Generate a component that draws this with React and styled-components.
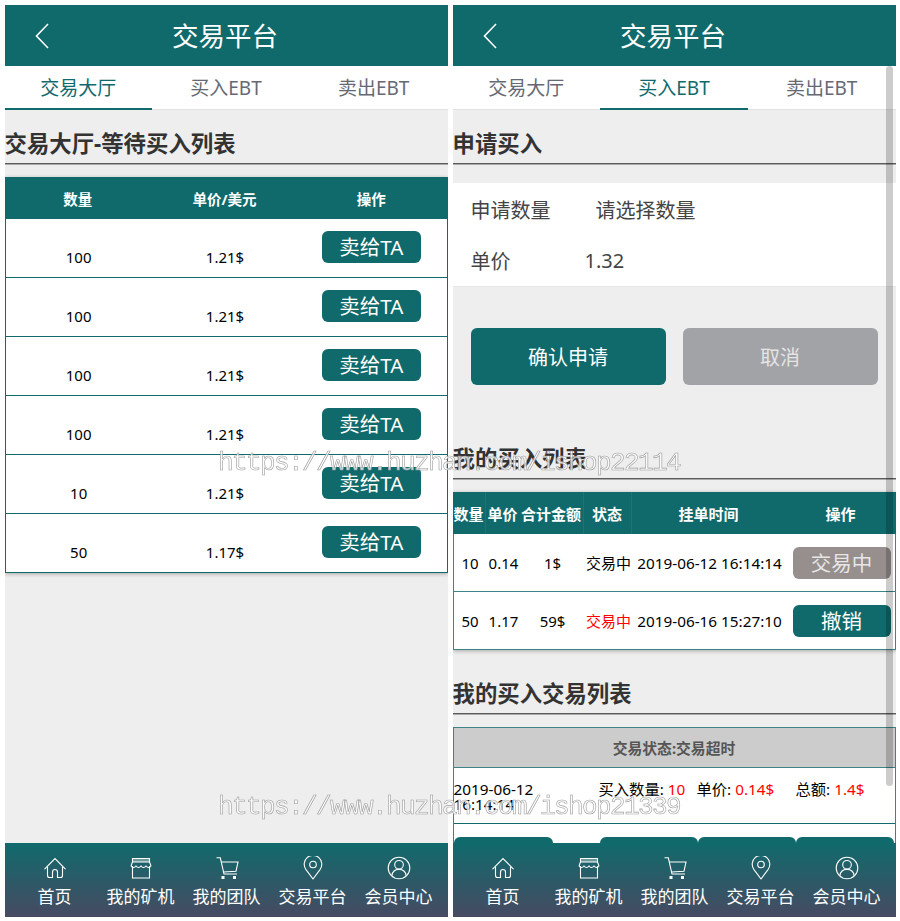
import styled, { createGlobalStyle } from "styled-components";

const teal = "#106a6c";

const Global = createGlobalStyle`
  * { box-sizing: border-box; }
  html, body { margin: 0; padding: 0; background: #fff; }
  body { font-family: "Noto Sans", "Noto Sans CJK SC", sans-serif; }
`;

const Page = styled.div`
  position: relative;
  width: 900px;
  height: 921px;
  padding: 5px 4px 4px 4.5px;
  display: flex;
  gap: 5px;
  overflow: hidden;
`;

const Phone = styled.div`
  position: relative;
  width: 443px;
  height: 912px;
  display: flex;
  flex-direction: column;
  background: #eee;
  overflow: hidden;
`;

const Header = styled.header`
  flex: none;
  height: 61px;
  display: grid;
  grid-template-columns: 1fr auto 1fr;
  align-items: center;
  background: ${teal};
  color: #fff;
`;

const Back = styled.svg`
  margin-left: 30px;
  display: block;
`;

const HeaderTitle = styled.h1`
  margin: 2px 2px 0 0;
  font-size: 26.5px;
  line-height: 1;
  font-weight: 400;
`;

const Tabs = styled.nav`
  flex: none;
  height: 44px;
  display: grid;
  grid-template-columns: repeat(3, 1fr);
  background: #fff;
  border-bottom: 1px solid #e2e2e2;
`;

const Tab = styled.div`
  display: flex;
  align-items: center;
  justify-content: center;
  height: 44px;
  font-size: 19px;
  color: ${({ $active }) => ($active ? teal : "#666973")};
  border-bottom: 2px solid ${({ $active }) => ($active ? teal : "transparent")};
`;

const Scroll = styled.main`
  flex: 1;
  min-height: 0;
  overflow: hidden;
`;

const SectionTitle = styled.h2`
  height: 41px;
  margin: ${({ $top }) => $top}px 0 0;
  padding-bottom: 2px;
  display: flex;
  align-items: center;
  font-size: 22.4px;
  font-weight: 700;
  color: #333;
  border-bottom: 1px solid #5c5c5c;
  box-shadow: 0 1px 0 #aaa;
`;

const Table = styled.div`
  margin-top: 13px;
  background: #fff;
  box-shadow: 0 1px 4px rgba(0, 0, 0, 0.3);
`;

const HallHead = styled.div`
  height: 42px;
  padding-right: 3px;
  display: grid;
  grid-template-columns: repeat(3, 1fr);
  align-items: center;
  background: ${teal};
  color: #fff;
  font-size: 14.5px;
  font-weight: 700;
  text-align: center;
`;

const HallRow = styled.div`
  height: 59px;
  padding-right: 2px;
  display: grid;
  grid-template-columns: repeat(3, 1fr);
  align-items: center;
  justify-items: center;
  border: 1px solid ${teal};
  border-top: 0;
  font-size: 15px;
  color: #000;
`;

const HallValue = styled.span`
  padding-top: 17px;
`;

const ActionBtn = styled.button`
  width: ${({ $w }) => $w}px;
  height: 32px;
  padding: 0;
  border: 0;
  border-radius: 6px;
  background: ${({ $muted }) => ($muted ? "#978e8e" : teal)};
  color: ${({ $muted }) => ($muted ? "#e6e6e6" : "#fff")};
  font: inherit;
  font-size: 20.5px;
  line-height: 32px;
`;

const HallBtn = styled(ActionBtn)`
  margin-bottom: 2px;
`;

const Form = styled.section`
  margin-top: 19px;
  padding-top: 1px;
  background: #fff;
  border-bottom: 1px solid #e6e6e6;
`;

const FormRow = styled.div`
  height: 51px;
  padding-left: 18px;
  display: flex;
  align-items: center;
  font-size: 20px;
  color: #444;
`;

const FormLabel = styled.span`
  width: ${({ $w }) => $w}px;
`;

const FormButtons = styled.div`
  margin-top: 41px;
  padding: 0 18px;
  display: grid;
  grid-template-columns: 195px 195px;
  gap: 17px;
`;

const BigBtn = styled.button`
  height: 57px;
  padding: 0;
  border: 0;
  border-radius: 6px;
  background: ${({ $grey }) => ($grey ? "#a2a3a7" : teal)};
  color: ${({ $grey }) => ($grey ? "#e4e4e4" : "#fff")};
  font: inherit;
  font-size: 20px;
`;

const buyCols = "33px 34px 64px 48px 154px 110px";

const BuyHead = styled.div`
  height: 42px;
  display: grid;
  grid-template-columns: ${buyCols};
  align-items: stretch;
  background: ${teal};
  color: #fff;
  font-size: 15px;
  font-weight: 700;
  text-align: center;
`;

const BuyHeadCell = styled.div`
  display: flex;
  align-items: center;
  justify-content: center;
  white-space: nowrap;
  border-right: ${({ $sep }) => ($sep ? "1px solid #1c7476" : "0")};
`;

const BuyRow = styled.div`
  height: 58px;
  display: grid;
  grid-template-columns: ${buyCols};
  align-items: center;
  justify-items: center;
  border: 1px solid #3d8486;
  border-top: 0;
  font-size: 15px;
  color: #000;
  white-space: nowrap;
`;

const Status = styled.span`
  color: ${({ $red }) => ($red ? "#f00" : "#000")};
`;

const TimeCell = styled.span`
  font-size: 15.3px;
`;

const Deals = styled.section`
  margin-top: 13px;
  background: #fff;
  border: 1px solid #3d8486;
  border-bottom: 0;
`;

const DealState = styled.div`
  height: 40px;
  display: flex;
  align-items: center;
  justify-content: center;
  background: #ccc;
  border-bottom: 1px solid #3d8486;
  font-size: 14.8px;
  font-weight: 700;
  color: #555;
`;

const DealRow = styled.div`
  height: 56px;
  padding-top: 14px;
  display: grid;
  grid-template-columns: 145px 98px 99px 1fr;
  font-size: 15.3px;
  line-height: 15px;
  color: #000;
  border-bottom: 1px solid ${teal};
`;

const DealDate = styled.span`
  width: 100px;
`;

const Red = styled.span`
  color: #f00;
`;

const DealBtns = styled.div`
  padding-top: 13px;
  display: grid;
  grid-template-columns: 99px 47px 98px 98px 98px;
`;

const DealBtn = styled.button`
  grid-column: ${({ $col }) => $col};
  height: 32px;
  padding: 0;
  border: 0;
  border-radius: 6px;
  background: ${teal};
`;

const Footer = styled.footer`
  flex: none;
  height: 74px;
  padding: 0 7px;
  display: grid;
  grid-template-columns: repeat(5, 86px);
  background: linear-gradient(180deg, #106a6c 0%, #474a62 100%);
  color: #fff;
`;

const NavItem = styled.div`
  display: flex;
  flex-direction: column;
  align-items: center;
  padding-top: 13px;
  font-size: 17px;
  white-space: nowrap;
`;

const NavIcon = styled.svg`
  display: block;
  height: 24px;
  width: 24px;
  margin-bottom: 5px;
`;

const NavLabel = styled.span`
  line-height: 24px;
`;

const ScrollThumb = styled.div`
  position: absolute;
  top: 61px;
  right: 3px;
  width: 7px;
  height: 720px;
  border-radius: 4px;
  background: rgba(0, 0, 0, 0.2);
`;

const Watermark = styled.div`
  position: absolute;
  left: 218px;
  top: ${({ $top }) => $top}px;
  font-family: "Liberation Mono", monospace;
  font-size: 26px;
  letter-spacing: -1.6px;
  line-height: 28px;
  white-space: nowrap;
  will-change: transform;
  color: rgba(255, 255, 255, 0.75);
  -webkit-text-stroke: 0.6px #9c9c9c;
`;

const icons = [
  <>
    <path d="M1.800 12.800 12 2.500l10.200 10.300" strokeLinecap="round" />
    <path d="M4.500 10.500v9a2 2 0 0 0 2 2h3V16a2.500 2.500 0 0 1 5 0v5.500h3a2 2 0 0 0 2-2v-9" />
  </>,
  <>
    <path d="M3.500 10v12h17V10" />
    <path d="M3.500 2.500h17v3.500h-17z" fill="#fff" fillOpacity=".35" />
    <path d="M2 10c1.500 2 3.500 2 5 0 1.500 2 3.500 2 5 0 1.500 2 3.500 2 5 0 1.500 2 3.500 2 5 0" />
    <path d="M2 10l1.500-4M22 10l-1.500-4" />
  </>,
  <>
    <path d="M1.500 1.800h3.800L9 18h13" />
    <path d="M6.200 6H23l-2 9.200L8.400 16" />
    <path d="M6.500 20h3v3h-3zM18 20h3v3h-3z" fill="#fff" stroke="none" />
  </>,
  <>
    <path d="M12 23 4.800 13.300A8.800 8.800 0 1 1 19.200 13.300z" strokeLinejoin="round" />
    <circle cx="12" cy="8.500" r="3.300" />
  </>,
  <>
    <circle cx="12" cy="12" r="10.800" />
    <circle cx="12" cy="8.800" r="4.300" />
    <path d="M4.800 19.800c.6-4 3.500-6.400 7.200-6.400s6.600 2.400 7.200 6.400" />
  </>,
];

const navLabels = ["首页", "我的矿机", "我的团队", "交易平台", "会员中心"];

const TopBar = () => (
  <Header>
    <Back width="14" height="26" viewBox="0 0 14 26" fill="none" stroke="#fff" strokeWidth="1.600">
      <path d="M13 1 1.500 13 13 25" />
    </Back>
    <HeaderTitle>交易平台</HeaderTitle>
    <span />
  </Header>
);

const TabBar = ({ active }) => (
  <Tabs>
    {["交易大厅", "买入EBT", "卖出EBT"].map((t, i) => (
      <Tab key={t} $active={i === active}>{t}</Tab>
    ))}
  </Tabs>
);

const BottomNav = () => (
  <Footer>
    {navLabels.map((label, i) => (
      <NavItem key={label}>
        <NavIcon viewBox="0 0 24 24" fill="none" stroke="#fff" strokeWidth="1.100">
          {icons[i]}
        </NavIcon>
        <NavLabel>{label}</NavLabel>
      </NavItem>
    ))}
  </Footer>
);

const hall = [
  ["100", "1.21$"],
  ["100", "1.21$"],
  ["100", "1.21$"],
  ["100", "1.21$"],
  ["10", "1.21$"],
  ["50", "1.17$"],
];

const buys = [
  { n: "10", p: "0.14", t: "1$", time: "2019-06-12 16:14:14", btn: "交易中", muted: true },
  { n: "50", p: "1.17", t: "59$", time: "2019-06-16 15:27:10", btn: "撤销", red: true },
];

export default function App() {
  return (
    <Page>
      <Global />
      <Phone>
        <TopBar />
        <TabBar active={0} />
        <Scroll>
          <SectionTitle $top={13}>交易大厅-等待买入列表</SectionTitle>
          <Table>
            <HallHead>
              <span>数量</span>
              <span>单价/美元</span>
              <span>操作</span>
            </HallHead>
            {hall.map(([n, p], i) => (
              <HallRow key={i}>
                <HallValue>{n}</HallValue>
                <HallValue>{p}</HallValue>
                <HallBtn $w={99}>卖给TA</HallBtn>
              </HallRow>
            ))}
          </Table>
        </Scroll>
        <BottomNav />
      </Phone>

      <Phone>
        <TopBar />
        <TabBar active={1} />
        <Scroll>
          <SectionTitle $top={13}>申请买入</SectionTitle>
          <Form>
            <FormRow>
              <FormLabel $w={125}>申请数量</FormLabel>
              <span>请选择数量</span>
            </FormRow>
            <FormRow>
              <FormLabel $w={114}>单价</FormLabel>
              <span>1.32</span>
            </FormRow>
          </Form>
          <FormButtons>
            <BigBtn>确认申请</BigBtn>
            <BigBtn $grey>取消</BigBtn>
          </FormButtons>

          <SectionTitle $top={53}>我的买入列表</SectionTitle>
          <Table>
            <BuyHead>
              <BuyHeadCell $sep>数量</BuyHeadCell>
              <BuyHeadCell>单价</BuyHeadCell>
              <BuyHeadCell $sep>合计金额</BuyHeadCell>
              <BuyHeadCell $sep>状态</BuyHeadCell>
              <BuyHeadCell>挂单时间</BuyHeadCell>
              <BuyHeadCell>操作</BuyHeadCell>
            </BuyHead>
            {buys.map((b) => (
              <BuyRow key={b.time}>
                <span>{b.n}</span>
                <span>{b.p}</span>
                <span>{b.t}</span>
                <Status $red={b.red}>交易中</Status>
                <TimeCell>{b.time}</TimeCell>
                <ActionBtn $w={98} $muted={b.muted}>{b.btn}</ActionBtn>
              </BuyRow>
            ))}
          </Table>

          <SectionTitle $top={23}>我的买入交易列表</SectionTitle>
          <Deals>
            <DealState>交易状态:交易超时</DealState>
            <DealRow>
              <DealDate>2019-06-12 16:14:14</DealDate>
              <span>买入数量: <Red>10</Red></span>
              <span>单价: <Red>0.14$</Red></span>
              <span>总额: <Red>1.4$</Red></span>
            </DealRow>
            <DealBtns>
              <DealBtn $col={1} />
              <DealBtn $col={3} />
              <DealBtn $col={4} />
              <DealBtn $col={5} />
            </DealBtns>
          </Deals>
        </Scroll>
        <BottomNav />
        <ScrollThumb />
      </Phone>

      <Watermark $top={449}>https://www.huzhan.com/ishop22114</Watermark>
      <Watermark $top={793}>https://www.huzhan.com/ishop21339</Watermark>
    </Page>
  );
}
